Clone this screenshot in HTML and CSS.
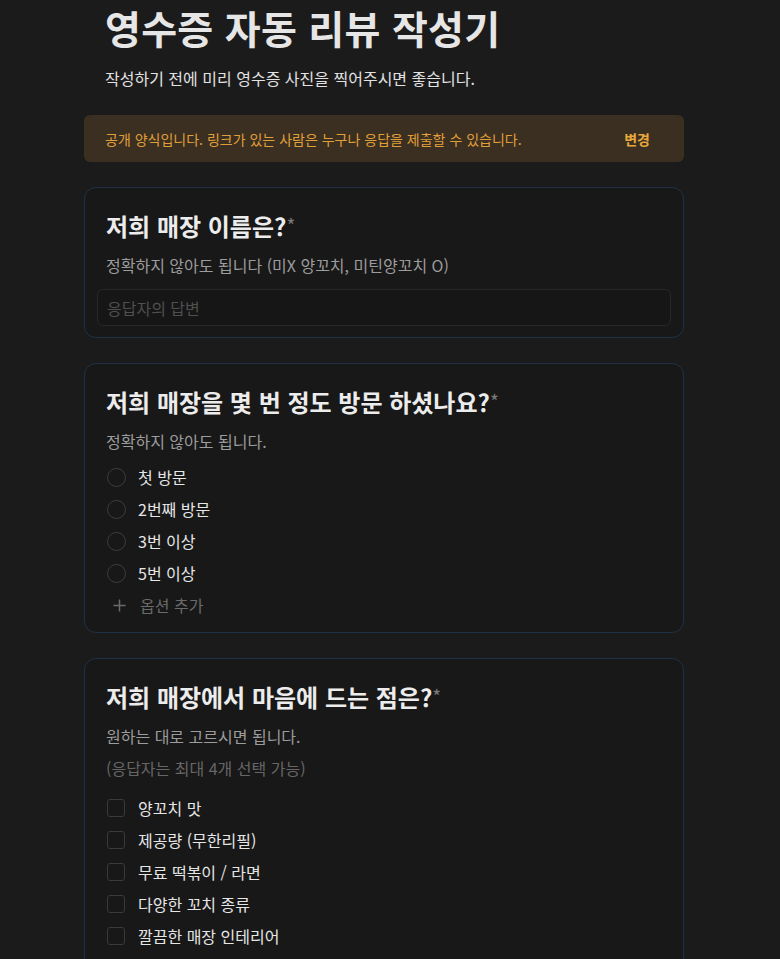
FILE: index.html
```html
<!DOCTYPE html>
<html lang="ko">
<head>
<meta charset="utf-8">
<title>영수증 자동 리뷰 작성기</title>
<link rel="stylesheet" href="styles.css">
</head>
<body>
<main class="page">
  <header class="header">
    <h1 class="title">영수증 자동 리뷰 작성기</h1>
    <p class="subtitle">작성하기 전에 미리 영수증 사진을 찍어주시면 좋습니다.</p>
  </header>

  <div class="notice">
    <span class="notice-text">공개 양식입니다. 링크가 있는 사람은 누구나 응답을 제출할 수 있습니다.</span>
    <span class="notice-action">변경</span>
  </div>

  <section class="card">
    <h2 class="q-title">저희 매장 이름은?<span class="req">*</span></h2>
    <p class="q-desc">정확하지 않아도 됩니다 (미X 양꼬치, 미틴양꼬치 O)</p>
    <div class="answer">응답자의 답변</div>
  </section>

  <section class="card">
    <h2 class="q-title">저희 매장을 몇 번 정도 방문 하셨나요?<span class="req">*</span></h2>
    <p class="q-desc">정확하지 않아도 됩니다.</p>
    <ul class="options">
      <li class="option"><span class="radio"></span><span class="label">첫 방문</span></li>
      <li class="option"><span class="radio"></span><span class="label">2번째 방문</span></li>
      <li class="option"><span class="radio"></span><span class="label">3번 이상</span></li>
      <li class="option"><span class="radio"></span><span class="label">5번 이상</span></li>
      <li class="option add"><span class="plus"><svg width="13" height="13" viewBox="0 0 13 13"><path d="M6.5 0.5v12M0.5 6.5h12" stroke="#6a6a6a" stroke-width="1.5" fill="none"/></svg></span><span class="label">옵션 추가</span></li>
    </ul>
  </section>

  <section class="card">
    <h2 class="q-title">저희 매장에서 마음에 드는 점은?<span class="req">*</span></h2>
    <p class="q-desc">원하는 대로 고르시면 됩니다.</p>
    <p class="q-note">(응답자는 최대 4개 선택 가능)</p>
    <ul class="options checks">
      <li class="option"><span class="checkbox"></span><span class="label">양꼬치 맛</span></li>
      <li class="option"><span class="checkbox"></span><span class="label">제공량 (무한리필)</span></li>
      <li class="option"><span class="checkbox"></span><span class="label">무료 떡볶이 / 라면</span></li>
      <li class="option"><span class="checkbox"></span><span class="label">다양한 꼬치 종류</span></li>
      <li class="option"><span class="checkbox"></span><span class="label">깔끔한 매장 인테리어</span></li>
      <li class="option"><span class="checkbox"></span><span class="label">친절한 서비스</span></li>
    </ul>
  </section>
</main>
</body>
</html>
```

FILE: styles.css
```css
html, body {
  margin: 0;
  padding: 0;
  background: #1b1b1b;
}
body {
  font-family: "Noto Sans CJK KR", "Noto Sans", sans-serif;
  color: #e4e4e4;
  overflow: hidden;
  height: 959px;
}
.page {
  width: 600px;
  margin-left: 84px;
  display: flex;
  flex-direction: column;
}
.header {
  padding: 2px 21px 0;
}
.title {
  margin: 0;
  font-size: 39px;
  line-height: 50px;
  font-weight: 700;
  letter-spacing: 0.3px;
  color: #e6e6e6;
}
.subtitle {
  margin: 14px 0 0;
  font-size: 16px;
  line-height: 24px;
  color: #e2e2e2;
}
.notice {
  margin-top: 25px;
  height: 47px;
  background: #3a2f21;
  border-radius: 6px;
  display: flex;
  align-items: center;
  justify-content: space-between;
  padding: 0 34px 0 21px;
  box-sizing: border-box;
}
.notice-text {
  font-size: 14px;
  color: #e19f3a;
}
.notice-action {
  font-size: 14px;
  font-weight: 700;
  color: #e9a83e;
}
.card {
  margin-top: 25px;
  border: 1px solid #1f3146;
  border-radius: 12px;
  background: #181818;
  padding: 21px 12px 11px;
}
.q-title {
  margin: 0;
  padding: 0 9px;
  font-size: 24px;
  line-height: 32px;
  font-weight: 700;
  color: #ececec;
}
.req {
  color: #7a7a7a;
  font-weight: 400;
  font-size: 19px;
  vertical-align: 3px;
}
.q-desc {
  margin: 11px 0 0;
  padding: 0 9px;
  font-size: 16px;
  line-height: 24px;
  color: #9c9c9c;
}
.q-note {
  margin: 8px 0 0;
  padding: 0 9px;
  font-size: 16px;
  line-height: 24px;
  color: #666;
}
.answer {
  margin-top: 12px;
  height: 37px;
  box-sizing: border-box;
  border: 1px solid #282828;
  border-radius: 6px;
  background: #161616;
  padding: 0 9px;
  display: flex;
  align-items: center;
  font-size: 16px;
  color: #4f4f4f;
}
.options {
  list-style: none;
  margin: 8px 0 0;
  padding: 0 0 0 10px;
}
.options.checks {
  margin-top: 12px;
}
.option {
  height: 32px;
  display: flex;
  align-items: center;
  gap: 12px;
}
.label {
  font-size: 16px;
  color: #e6e6e6;
}
.radio {
  width: 19px;
  height: 19px;
  box-sizing: border-box;
  border: 1.5px solid #3c3c3c;
  border-radius: 50%;
}
.checkbox {
  width: 18px;
  height: 18px;
  box-sizing: border-box;
  border: 1.5px solid #3a3a3a;
  border-radius: 3px;
  margin-right: 1px;
}
.plus {
  width: 19px;
  height: 19px;
  display: flex;
  align-items: center;
  justify-content: center;
  padding-left: 5px;
  box-sizing: border-box;
}
.option.add .label {
  color: #6a6a6a;
  margin-left: 2px;
}
```
